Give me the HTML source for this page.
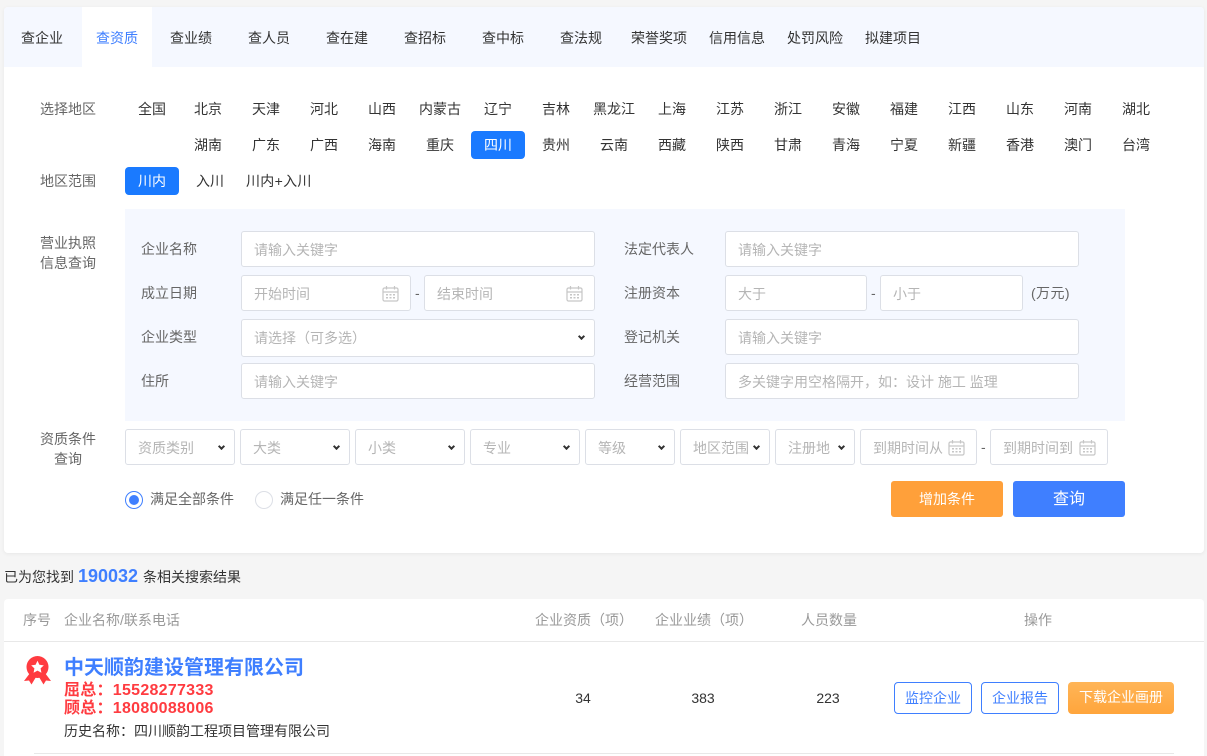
<!DOCTYPE html>
<html lang="zh"><head><meta charset="utf-8"><title>查资质</title>
<style>
*{box-sizing:border-box;margin:0;padding:0}
html,body{width:1207px;height:756px;overflow:hidden;background:#f5f5f5}
body{position:relative;font-family:"Liberation Sans","Noto Sans CJK SC",sans-serif;font-size:14px;color:#333}
.a{position:absolute;white-space:nowrap}
.t{position:absolute;white-space:nowrap;line-height:20px;height:20px}
.c{position:absolute;white-space:nowrap;line-height:20px;height:20px;width:80px;text-align:center}
.tab{color:#333;top:28px}
.lb{color:#666}
.box{position:absolute;background:#fff;border:1px solid #dcdfe6;border-radius:3px;color:#b5b5b5;line-height:36px;padding-left:12px;white-space:nowrap;overflow:hidden}
.ic{position:absolute;width:17px;height:17px}
.sel:after{content:"";box-sizing:border-box;position:absolute;right:10.5px;top:13.5px;width:5px;height:5px;border-right:2px solid #333;border-bottom:2px solid #333;transform:rotate(45deg)}
.btn{position:absolute;text-align:center;border-radius:3px;color:#fff}
.out{position:absolute;top:682px;width:78px;height:32px;border:1px solid #3f7fff;border-radius:4px;color:#3f7fff;text-align:center;line-height:31px;background:#fff}
</style></head><body>
<svg width="0" height="0" style="position:absolute"><defs><symbol id="cal" viewBox="0 0 17 17"><g fill="none" stroke="#c6c6c6" stroke-width="1.2"><rect x="1" y="3" width="15" height="13" rx="1.5"/><path d="M1 7h15M4.5 1v3.5M12.500 1v3.5"/></g><g fill="#c6c6c6"><rect x="4" y="9" width="2" height="1.500"/><rect x="7.500" y="9" width="2" height="1.500"/><rect x="11" y="9" width="2" height="1.500"/><rect x="4" y="12" width="2" height="1.500"/><rect x="7.500" y="12" width="2" height="1.500"/><rect x="11" y="12" width="2" height="1.500"/></g></symbol></defs></svg>

<div class="a" style="left:4px;top:7px;width:1200px;height:546px;background:#fff;border-radius:4px;box-shadow:0 1px 4px rgba(0,0,0,.06)"></div>
<div class="a" style="left:4px;top:7px;width:1200px;height:60px;background:#f5f8ff;border-radius:4px 4px 0 0"></div>
<div class="a" style="left:82px;top:7px;width:70px;height:60px;background:#fff"></div>

<span class="t tab" style="left:21px">查企业</span>
<span class="t tab" style="left:96px;color:#3f7fff">查资质</span>
<span class="t tab" style="left:170px">查业绩</span>
<span class="t tab" style="left:248px">查人员</span>
<span class="t tab" style="left:326px">查在建</span>
<span class="t tab" style="left:404px">查招标</span>
<span class="t tab" style="left:482px">查中标</span>
<span class="t tab" style="left:560px">查法规</span>
<span class="t tab" style="left:631px">荣誉奖项</span>
<span class="t tab" style="left:709px">信用信息</span>
<span class="t tab" style="left:787px">处罚风险</span>
<span class="t tab" style="left:865px">拟建项目</span>

<span class="t lb" style="left:40px;top:99px">选择地区</span>
<span class="c" style="left:112px;top:99px">全国</span>
<span class="c" style="left:168px;top:99px">北京</span>
<span class="c" style="left:226px;top:99px">天津</span>
<span class="c" style="left:284px;top:99px">河北</span>
<span class="c" style="left:342px;top:99px">山西</span>
<span class="c" style="left:400px;top:99px">内蒙古</span>
<span class="c" style="left:458px;top:99px">辽宁</span>
<span class="c" style="left:516px;top:99px">吉林</span>
<span class="c" style="left:574px;top:99px">黑龙江</span>
<span class="c" style="left:632px;top:99px">上海</span>
<span class="c" style="left:690px;top:99px">江苏</span>
<span class="c" style="left:748px;top:99px">浙江</span>
<span class="c" style="left:806px;top:99px">安徽</span>
<span class="c" style="left:864px;top:99px">福建</span>
<span class="c" style="left:922px;top:99px">江西</span>
<span class="c" style="left:980px;top:99px">山东</span>
<span class="c" style="left:1038px;top:99px">河南</span>
<span class="c" style="left:1096px;top:99px">湖北</span>

<span class="c" style="left:168px;top:135px">湖南</span>
<span class="c" style="left:226px;top:135px">广东</span>
<span class="c" style="left:284px;top:135px">广西</span>
<span class="c" style="left:342px;top:135px">海南</span>
<span class="c" style="left:400px;top:135px">重庆</span>
<div class="a" style="left:471px;top:131px;width:54px;height:28px;background:#1a7aff;border-radius:4px"></div>
<span class="c" style="left:458px;top:135px;color:#fff">四川</span>
<span class="c" style="left:516px;top:135px">贵州</span>
<span class="c" style="left:574px;top:135px">云南</span>
<span class="c" style="left:632px;top:135px">西藏</span>
<span class="c" style="left:690px;top:135px">陕西</span>
<span class="c" style="left:748px;top:135px">甘肃</span>
<span class="c" style="left:806px;top:135px">青海</span>
<span class="c" style="left:864px;top:135px">宁夏</span>
<span class="c" style="left:922px;top:135px">新疆</span>
<span class="c" style="left:980px;top:135px">香港</span>
<span class="c" style="left:1038px;top:135px">澳门</span>
<span class="c" style="left:1096px;top:135px">台湾</span>

<span class="t lb" style="left:40px;top:171px">地区范围</span>
<div class="a" style="left:125px;top:167px;width:54px;height:28px;background:#1a7aff;border-radius:4px"></div>
<span class="c" style="left:112px;top:171px;color:#fff">川内</span>
<span class="t" style="left:196px;top:171px">入川</span>
<span class="t" style="left:246px;top:171px;word-spacing:0;letter-spacing:.3px">川内+入川</span>

<div class="a" style="left:125px;top:209px;width:1000px;height:212px;background:#f5f8ff"></div>
<span class="t lb" style="left:40px;top:233px">营业执照</span>
<span class="t lb" style="left:40px;top:253px">信息查询</span>

<span class="t lb" style="left:141px;top:239px">企业名称</span>
<div class="box" style="left:241px;top:231px;width:354px;height:36px">请输入关键字</div>
<span class="t lb" style="left:141px;top:283px">成立日期</span>
<div class="box" style="left:241px;top:275px;width:170px;height:36px">开始时间</div>
<svg class="ic" style="left:382px;top:285px"><use href="#cal"/></svg>
<span class="t" style="left:415px;top:283px;color:#666">-</span>
<div class="box" style="left:424px;top:275px;width:171px;height:36px">结束时间</div>
<svg class="ic" style="left:566px;top:285px"><use href="#cal"/></svg>
<span class="t lb" style="left:141px;top:327px">企业类型</span>
<div class="box sel" style="left:241px;top:319px;width:354px;height:38px;line-height:37px">请选择（可多选）</div>
<span class="t lb" style="left:141px;top:371px">住所</span>
<div class="box" style="left:241px;top:363px;width:354px;height:36px">请输入关键字</div>

<span class="t lb" style="left:624px;top:239px">法定代表人</span>
<div class="box" style="left:725px;top:231px;width:354px;height:36px">请输入关键字</div>
<span class="t lb" style="left:624px;top:283px">注册资本</span>
<div class="box" style="left:725px;top:275px;width:142px;height:36px">大于</div>
<span class="t" style="left:871px;top:283px;color:#666">-</span>
<div class="box" style="left:880px;top:275px;width:143px;height:36px">小于</div>
<span class="t lb" style="left:1031px;top:283px;letter-spacing:.4px">(万元)</span>
<span class="t lb" style="left:624px;top:327px">登记机关</span>
<div class="box" style="left:725px;top:319px;width:354px;height:36px">请输入关键字</div>
<span class="t lb" style="left:624px;top:371px">经营范围</span>
<div class="box" style="left:725px;top:363px;width:354px;height:36px">多关键字用空格隔开，如：设计 施工 监理</div>

<span class="t lb" style="left:40px;top:429px">资质条件</span>
<span class="t lb" style="left:54px;top:449px">查询</span>
<div class="box sel" style="left:125px;top:429px;width:110px;height:36px">资质类别</div>
<div class="box sel" style="left:240px;top:429px;width:110px;height:36px">大类</div>
<div class="box sel" style="left:355px;top:429px;width:110px;height:36px">小类</div>
<div class="box sel" style="left:470px;top:429px;width:110px;height:36px">专业</div>
<div class="box sel" style="left:585px;top:429px;width:90px;height:36px">等级</div>
<div class="box sel" style="left:680px;top:429px;width:90px;height:36px">地区范围</div>
<div class="box sel" style="left:775px;top:429px;width:80px;height:36px">注册地</div>
<div class="box" style="left:860px;top:429px;width:117px;height:36px">到期时间从</div>
<svg class="ic" style="left:948px;top:439px"><use href="#cal"/></svg>
<span class="t" style="left:981px;top:437px;color:#666">-</span>
<div class="box" style="left:990px;top:429px;width:118px;height:36px">到期时间到</div>
<svg class="ic" style="left:1079px;top:439px"><use href="#cal"/></svg>

<div class="a" style="left:125px;top:491px;width:18px;height:18px;border:1px solid #3f7fff;border-radius:50%;background:#fff"></div>
<div class="a" style="left:129px;top:495px;width:10px;height:10px;border-radius:50%;background:#3f7fff"></div>
<span class="t lb" style="left:150px;top:489px">满足全部条件</span>
<div class="a" style="left:255px;top:491px;width:18px;height:18px;border:1px solid #dcdfe6;border-radius:50%;background:#fff"></div>
<span class="t lb" style="left:280px;top:489px">满足任一条件</span>

<div class="btn" style="left:891px;top:481px;width:112px;height:36px;line-height:37px;background:#ffa03a">增加条件</div>
<div class="btn" style="left:1013px;top:481px;width:112px;height:36px;line-height:37px;background:#3f7fff;font-size:16px">查询</div>

<span class="t" style="left:4px;top:567px">已为您找到</span>
<span class="t" style="left:78px;top:566px;color:#3f7fff;font-size:18px;font-weight:bold">190032</span>
<span class="t" style="left:143px;top:567px">条相关搜索结果</span>

<div class="a" style="left:4px;top:599px;width:1200px;height:157px;background:#fff;border-radius:4px 4px 0 0"></div>
<div class="a" style="left:4px;top:641px;width:1200px;height:1px;background:#e8e8e8"></div>
<span class="t" style="left:23px;top:610px;color:#999">序号</span>
<span class="t" style="left:64px;top:610px;color:#999">企业名称/联系电话</span>
<span class="t" style="left:535px;top:610px;color:#999">企业资质（项）</span>
<span class="t" style="left:655px;top:610px;color:#999">企业业绩（项）</span>
<span class="t" style="left:801px;top:610px;color:#999">人员数量</span>
<span class="t" style="left:1024px;top:610px;color:#999">操作</span>

<svg class="a" style="left:24px;top:656px" width="27" height="29" viewBox="0 0 27 29">
<path d="M6 17L0 25l5-.5L7.500 28.500 12 21zM21 17l6 8-5-.5-2.500 4L15 21z" fill="#ff3b40"/>
<circle cx="13.500" cy="11" r="11" fill="#ff3b40"/>
<path d="M13.500 4.800l1.900 4 4.400.6-3.200 3 .8 4.400-3.900-2.200-3.900 2.200.8-4.400-3.200-3 4.400-.6z" fill="#fff"/>
</svg>
<span class="t" style="left:64px;top:658px;color:#3f7fff;font-size:20px;font-weight:bold">中天顺韵建设管理有限公司</span>
<span class="t" style="left:64px;top:681px;color:#ff3b40;font-size:16px;font-weight:bold;letter-spacing:.27px">屈总：15528277333</span>
<span class="t" style="left:64px;top:699px;color:#ff3b40;font-size:16px;font-weight:bold;letter-spacing:.27px">顾总：18080088006</span>
<span class="t" style="left:64px;top:721px">历史名称：四川顺韵工程项目管理有限公司</span>
<span class="c" style="left:543px;top:688px">34</span>
<span class="c" style="left:663px;top:688px">383</span>
<span class="c" style="left:788px;top:688px">223</span>
<div class="out" style="left:894px">监控企业</div>
<div class="out" style="left:981px">企业报告</div>
<div class="btn" style="left:1068px;top:682px;width:106px;height:32px;line-height:31px;border-radius:4px;background:linear-gradient(#ffb557,#ffa53c)">下载企业画册</div>
<div class="a" style="left:34px;top:753px;width:1140px;height:1px;background:#e8e8e8"></div>
</body></html>
